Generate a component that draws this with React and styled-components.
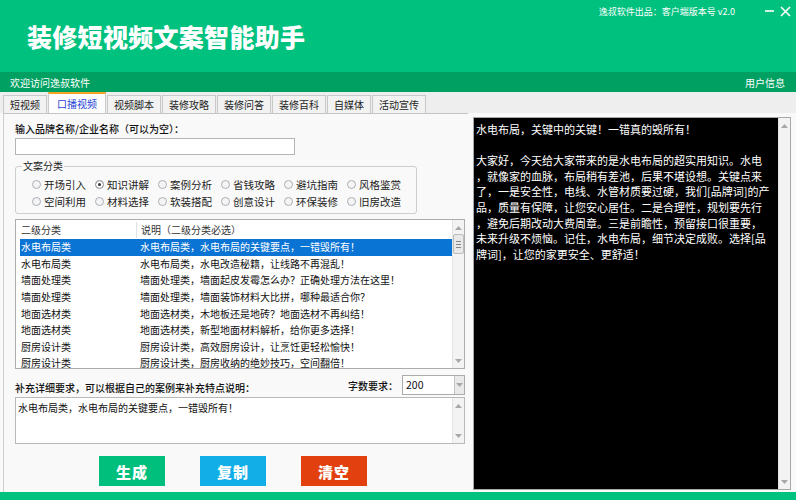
import React, { useState } from "react";
import styled, { createGlobalStyle } from "styled-components";

const tabs = ["短视频", "口播视频", "视频脚本", "装修攻略", "装修问答", "装修百科", "自媒体", "活动宣传"];
const categories = [
  "开场引入", "知识讲解", "案例分析", "省钱攻略", "避坑指南", "风格鉴赏",
  "空间利用", "材料选择", "软装搭配", "创意设计", "环保装修", "旧房改造",
];
const rows = [
  ["水电布局类", "水电布局类，水电布局的关键要点，一错毁所有！"],
  ["水电布局类", "水电布局类，水电改造秘籍，让线路不再混乱！"],
  ["墙面处理类", "墙面处理类，墙面起皮发霉怎么办？正确处理方法在这里！"],
  ["墙面处理类", "墙面处理类，墙面装饰材料大比拼，哪种最适合你？"],
  ["地面选材类", "地面选材类，木地板还是地砖？地面选材不再纠结！"],
  ["地面选材类", "地面选材类，新型地面材料解析，给你更多选择！"],
  ["厨房设计类", "厨房设计类，高效厨房设计，让烹饪更轻松愉快！"],
  ["厨房设计类", "厨房设计类，厨房收纳的绝妙技巧，空间翻倍！"],
];
const output = [
  "水电布局，关键中的关键！一错真的毁所有！",
  "",
  "大家好，今天给大家带来的是水电布局的超实用知识。水电",
  "，就像家的血脉，布局稍有差池，后果不堪设想。关键点来",
  "了，一是安全性，电线、水管材质要过硬，我们[品牌词]的产",
  "品，质量有保障，让您安心居住。二是合理性，规划要先行",
  "，避免后期改动大费周章。三是前瞻性，预留接口很重要，",
  "未来升级不烦恼。记住，水电布局，细节决定成败。选择[品",
  "牌词]，让您的家更安全、更舒适！",
].join("\n");

function Arrow({ up }) {
  return (
    <svg width="7" height="4" viewBox="0 0 7 4">
      <path d={up ? "M0 4 L3.5 0 L7 4 Z" : "M0 0 L3.5 4 L7 0 Z"} fill="#a8a8a8" />
    </svg>
  );
}

function Scroll({ thumb }) {
  return (
    <ScrollBar>
      <Arrow up />
      {thumb ? (
        <Thumb>
          <i />
          <i />
          <i />
        </Thumb>
      ) : (
        <span />
      )}
      <Arrow />
    </ScrollBar>
  );
}

export default function App() {
  const [active, setActive] = useState(1);
  const [category, setCategory] = useState("知识讲解");
  const [selected, setSelected] = useState(0);
  return (
    <Window>
      <GlobalStyle />
      <Header>
        <Title>装修短视频文案智能助手</Title>
        <HeaderRight>
          <Meta>逸叔软件出品：客户端版本号 v2.0</Meta>
          <WinButtons>
            <svg width="10" height="10" viewBox="0 0 10 10">
              <path d="M0 5 H9" stroke="#fff" strokeWidth="1.6" />
            </svg>
            <svg width="11" height="11" viewBox="0 0 11 11">
              <path d="M1 1 L10 10 M10 1 L1 10" stroke="#fff" strokeWidth="1.6" />
            </svg>
          </WinButtons>
        </HeaderRight>
      </Header>
      <SubBar>
        <span>欢迎访问逸叔软件</span>
        <span>用户信息</span>
      </SubBar>
      <TabStrip>
        {tabs.map((t, i) => (
          <Tab key={t} $active={i === active} onClick={() => setActive(i)}>
            {t}
          </Tab>
        ))}
      </TabStrip>
      <Body>
        <Panel>
          <Label>输入品牌名称/企业名称（可以为空）：</Label>
          <Input />
          <Group>
            <Legend>文案分类</Legend>
            <RadioGrid>
              {categories.map((c) => (
                <RadioItem key={c} onClick={() => setCategory(c)}>
                  <Radio $checked={c === category} />
                  {c}
                </RadioItem>
              ))}
            </RadioGrid>
          </Group>
          <ListBox>
            <ListMain>
              <ListHead>
                <Cell $first>二级分类</Cell>
                <Cell $sep>说明（二级分类必选）</Cell>
              </ListHead>
              {rows.map((r, i) => (
                <ListRow key={i} $selected={i === selected} onClick={() => setSelected(i)}>
                  <Cell $first>{r[0]}</Cell>
                  <Cell>{r[1]}</Cell>
                </ListRow>
              ))}
            </ListMain>
            <Scroll thumb />
          </ListBox>
          <ExtraRow>
            <ExtraLabel>补充详细要求，可以根据自己的案例来补充特点说明：</ExtraLabel>
            <CountLabel>字数要求：</CountLabel>
            <Select>
              <span>200</span>
              <DropBtn>
                <Arrow />
              </DropBtn>
            </Select>
          </ExtraRow>
          <TextBox>
            <TextContent>水电布局类，水电布局的关键要点，一错毁所有！</TextContent>
            <Scroll />
          </TextBox>
          <Buttons>
            <Button $bg="#00bf7d">生成</Button>
            <Button $bg="#12aee8">复制</Button>
            <Button $bg="#e2410f">清空</Button>
          </Buttons>
        </Panel>
        <Output>
          <OutputText>{output}</OutputText>
          <Scroll />
        </Output>
      </Body>
      <Footer />
    </Window>
  );
}

const GlobalStyle = createGlobalStyle`
  body {
    margin: 0;
    background: #f9f9f9;
    font-family: "Noto Sans CJK SC", "Noto Sans", sans-serif;
  }
`;

const Window = styled.div`
  width: 796px;
  height: 500px;
  overflow: hidden;
  display: flex;
  flex-direction: column;
  background: #f9f9f9;
`;

const Header = styled.div`
  height: 72px;
  background: #00c17e;
  display: flex;
  justify-content: space-between;
`;

const Title = styled.div`
  color: #fff;
  font-size: 25px;
  font-weight: 900;
  letter-spacing: 0.3px;
  line-height: 30px;
  padding: 21px 0 0 27px;
`;

const HeaderRight = styled.div`
  display: flex;
  align-items: flex-start;
  padding-top: 5px;
`;

const Meta = styled.div`
  color: #fff;
  font-size: 9px;
  line-height: 14px;
  margin-right: 30px;
`;

const WinButtons = styled.div`
  display: flex;
  gap: 5px;
  align-items: center;
  padding-right: 5px;
  height: 12px;
`;

const SubBar = styled.div`
  height: 20px;
  background: #00a062;
  color: #fff;
  font-size: 10px;
  display: flex;
  align-items: center;
  justify-content: space-between;
  padding: 0 11px 0 10px;
`;

const TabStrip = styled.div`
  height: 21px;
  background: #eeeeee;
  display: flex;
  align-items: flex-end;
  gap: 1px;
  padding-left: 3px;
`;

const Tab = styled.div`
  height: ${(p) => (p.$active ? "19px" : "17px")};
  padding: 0 ${(p) => (p.$active ? "8px" : "6px")};
  display: flex;
  align-items: center;
  font-size: 10px;
  color: ${(p) => (p.$active ? "#1f45d8" : "#222")};
  background: ${(p) => (p.$active ? "#fdfdfd" : "#f2f2f2")};
  border: 1px solid #c9c9c9;
  border-bottom: none;
  border-top: ${(p) => (p.$active ? "2px solid #f2a31f" : "1px solid #c9c9c9")};
  cursor: default;
`;

const Body = styled.div`
  flex: 1;
  display: flex;
`;

const Panel = styled.div`
  width: 453px;
  margin-left: 3px;
  border-left: 1px solid #cfcfcf;
  border-top: 1px solid #c4c4c4;
  padding: 8px 0 0 11px;
  display: flex;
  flex-direction: column;
`;

const Label = styled.div`
  font-size: 10px;
  line-height: 14px;
  font-weight: 500;
  color: #111;
`;

const Input = styled.div`
  margin-top: 2px;
  width: 278px;
  height: 15px;
  background: #fff;
  border: 1px solid #b5b5b5;
`;

const Group = styled.fieldset`
  margin: 5px 0 0 0;
  width: 384px;
  padding: 0 0 3px 16px;
  border: 1px solid #cdcdcd;
  border-radius: 3px;
`;

const Legend = styled.legend`
  font-size: 10px;
  line-height: 12px;
  color: #222;
  padding: 0 1px;
  margin-left: -10px;
`;

const RadioGrid = styled.div`
  margin-top: 4px;
  display: grid;
  grid-template-columns: repeat(6, 63px);
  grid-auto-rows: 17px;
`;

const RadioItem = styled.div`
  display: flex;
  align-items: center;
  gap: 3px;
  font-size: 10.5px;
  color: #222;
`;

const Radio = styled.span`
  width: 7px;
  height: 7px;
  border-radius: 50%;
  border: 1px solid #aab0b8;
  box-shadow: inset 0 0 0 ${(p) => (p.$checked ? "2px #fff" : "0 #fff")};
  background: ${(p) => (p.$checked ? "#333" : "#f4f4f4")};
`;

const ListBox = styled.div`
  margin-top: 5px;
  width: 448px;
  height: 148px;
  border: 1px solid #acacac;
  background: #fff;
  display: flex;
`;

const ListMain = styled.div`
  flex: 1;
  overflow: hidden;
  padding: 1px 0 0 4px;
`;

const ListHead = styled.div`
  display: flex;
  height: 17px;
  align-items: center;
  color: #333;
  font-size: 10px;
  margin-bottom: 1px;
`;

const ListRow = styled.div`
  display: flex;
  height: 16.6px;
  align-items: center;
  font-size: 10px;
  color: ${(p) => (p.$selected ? "#fff" : "#111")};
  background: ${(p) => (p.$selected ? "#0a74d4" : "transparent")};
`;

const Cell = styled.div`
  width: ${(p) => (p.$first ? "115px" : "auto")};
  padding-left: ${(p) => (p.$first ? "1px" : "4px")};
  border-left: ${(p) => (p.$sep ? "1px solid #e2e2e2" : "none")};
  white-space: nowrap;
  line-height: 16px;
`;

const ScrollBar = styled.div`
  width: 12px;
  background: #f3f3f3;
  border-left: 1px solid #e4e4e4;
  display: flex;
  flex-direction: column;
  align-items: center;
  justify-content: space-between;
  padding: 6px 0 5px;
  box-sizing: border-box;
`;

const Thumb = styled.div`
  width: 9px;
  height: 18px;
  margin-top: 4px;
  margin-bottom: auto;
  background: #e8e8e8;
  border: 1px solid #bcbcbc;
  border-radius: 2px;
  display: flex;
  flex-direction: column;
  justify-content: center;
  align-items: center;
  gap: 2px;
  i {
    width: 5px;
    height: 1px;
    background: #888;
  }
`;

const ExtraRow = styled.div`
  margin-top: 6px;
  width: 450px;
  height: 20px;
  display: flex;
  align-items: center;
`;

const ExtraLabel = styled.div`
  font-size: 10px;
  font-weight: 500;
  color: #111;
  padding-top: 5px;
  flex: 1;
`;

const CountLabel = styled.div`
  font-size: 10px;
  font-weight: 500;
  color: #111;
  margin-right: 4px;
`;

const Select = styled.div`
  width: 61px;
  height: 18px;
  background: #fff;
  border: 1px solid #ababab;
  display: flex;
  justify-content: space-between;
  font-size: 10.5px;
  color: #111;
  span {
    padding: 1px 0 0 3px;
  }
`;

const DropBtn = styled.div`
  width: 9px;
  background: #e9e9e9;
  border-left: 1px solid #c2c2c2;
  display: flex;
  align-items: center;
  justify-content: center;
`;

const TextBox = styled.div`
  margin-top: 2px;
  width: 448px;
  height: 45px;
  background: #fff;
  border: 1px solid #b9b9b9;
  display: flex;
`;

const TextContent = styled.div`
  flex: 1;
  font-size: 10px;
  color: #111;
  padding: 2px 0 0 2px;
`;

const Buttons = styled.div`
  margin-top: 12px;
  display: flex;
  gap: 35px;
  padding-left: 84px;
`;

const Button = styled.div`
  width: 66px;
  height: 30px;
  background: ${(p) => p.$bg};
  color: #fff;
  font-size: 15px;
  font-weight: 900;
  display: flex;
  align-items: center;
  justify-content: center;
  letter-spacing: 1px;
`;

const Output = styled.div`
  margin: 4px 0 2px 5px;
  width: 316px;
  border: 1px solid #a8a8a8;
  display: flex;
  background: #000;
`;

const OutputText = styled.div`
  flex: 1;
  color: #fff;
  font-size: 11px;
  line-height: 15.6px;
  padding: 4px 0 0 2px;
  white-space: pre;
  overflow: hidden;
`;

const Footer = styled.div`
  height: 8px;
  background: #00c17e;
`;
